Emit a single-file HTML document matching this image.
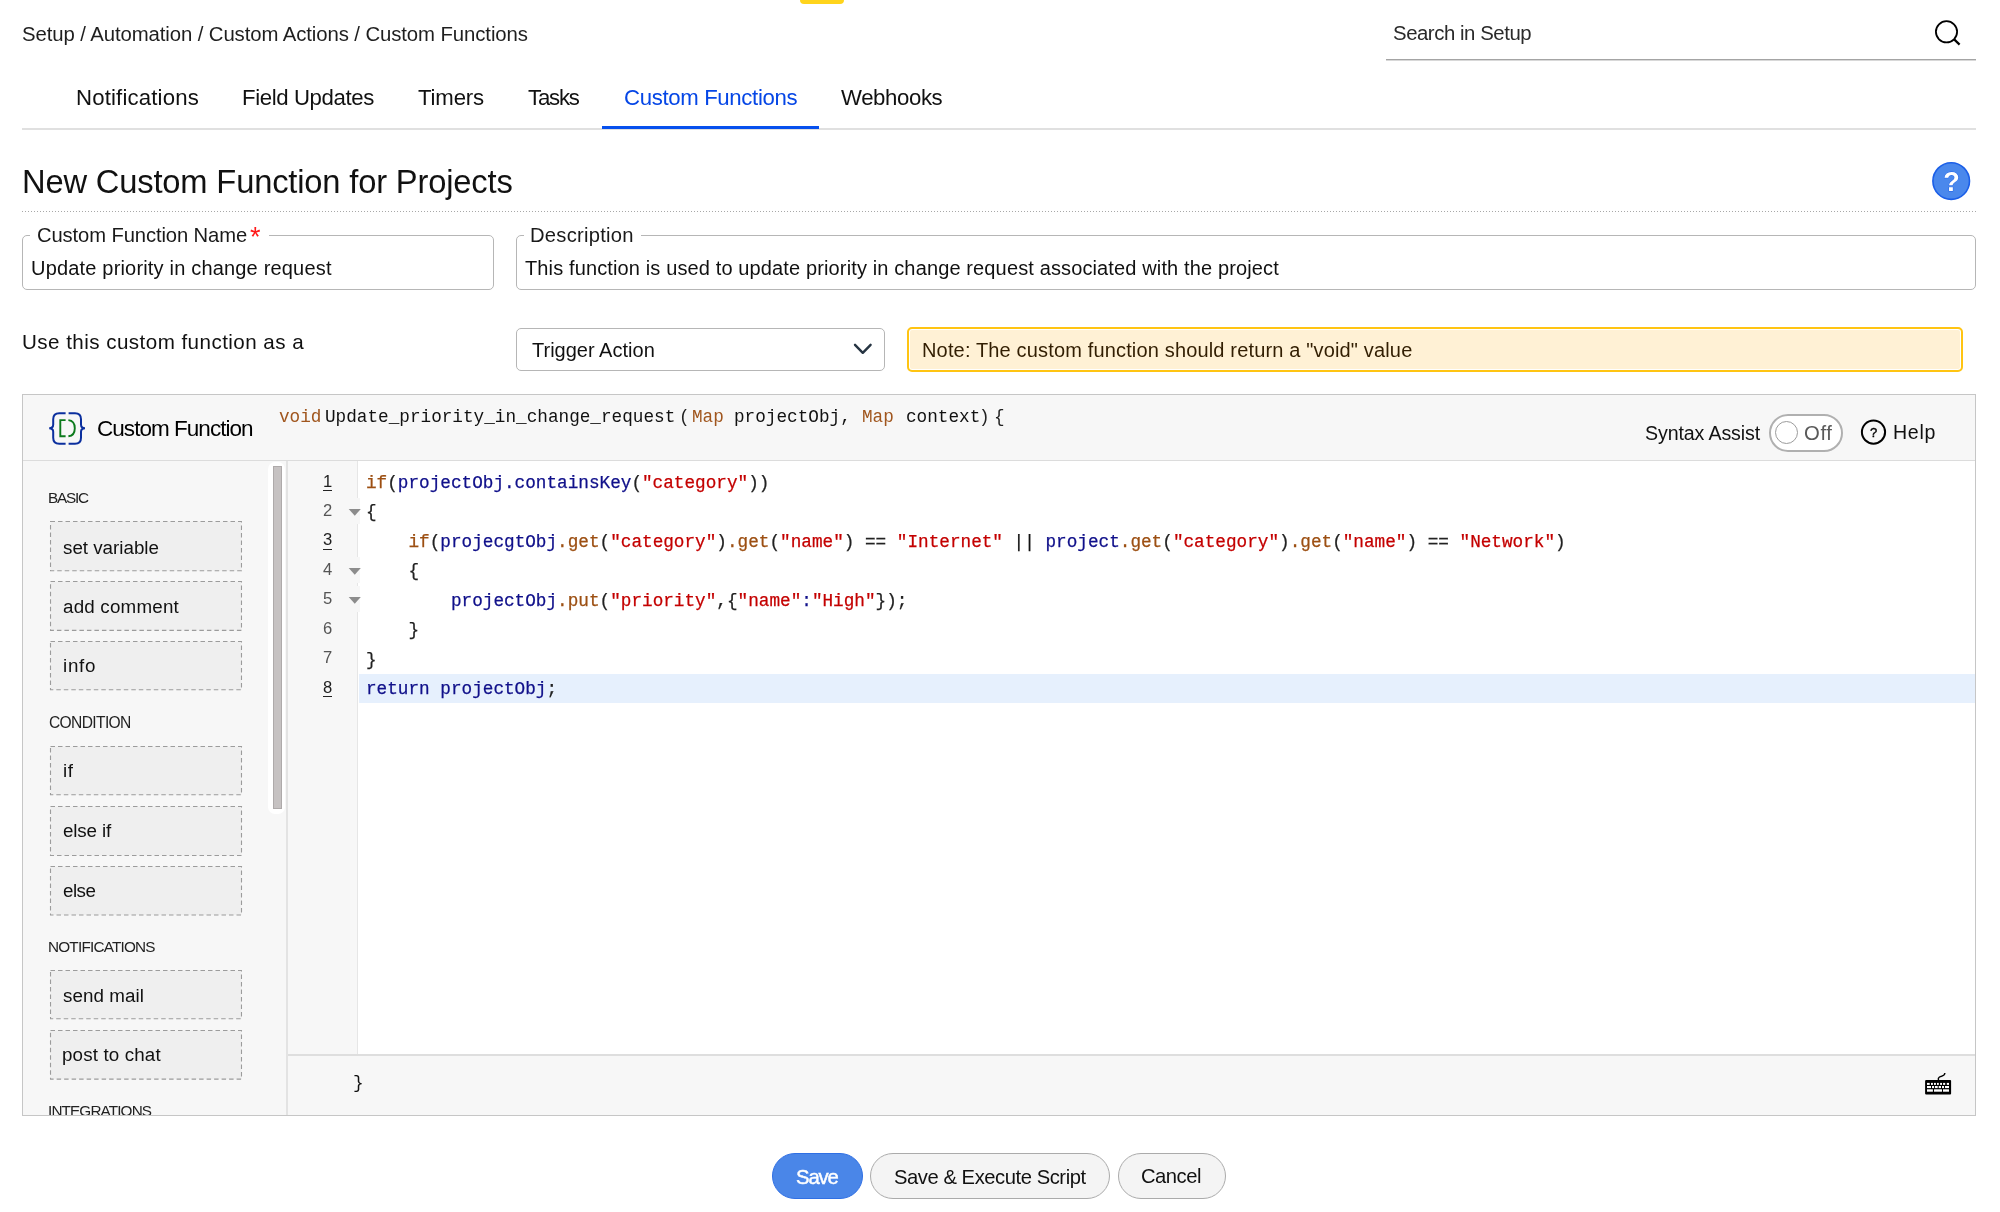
<!DOCTYPE html>
<html><head><meta charset="utf-8"><title>Custom Function</title>
<style>
html,body{margin:0;padding:0;width:2000px;height:1212px;overflow:hidden;background:#fff;font-family:"Liberation Sans",sans-serif;}
.t{position:absolute;white-space:pre;will-change:transform;}
.b{position:absolute;box-sizing:border-box;}
svg.b{overflow:visible;will-change:transform;}
</style></head><body>
<div class="b" style="left:799.6px;top:-4px;width:44px;height:8.2px;background:#ffd41c;border-radius:4px;"></div>
<div class="b" style="left:1386px;top:59px;width:590px;height:1px;background:#a4a4a4;box-shadow:0 1px 0 #d8d8d8;"></div>
<svg class="b" style="left:1930px;top:16px" width="36" height="36" viewBox="1930 16 36 36"><circle cx="1946.5" cy="31.8" r="10.6" fill="none" stroke="#000" stroke-width="1.8"/><line x1="1954.2" y1="39.4" x2="1959.6" y2="44.6" stroke="#000" stroke-width="2.2"/></svg>
<div class="b" style="left:22px;top:128px;width:1954px;height:2px;background:#e0e0e0;"></div>
<div class="b" style="left:602px;top:126px;width:217px;height:3px;background:#0650ee;"></div>
<div class="b" style="left:22px;top:211px;width:1954px;height:1px;background:repeating-linear-gradient(to right,#a8a8a8 0 1px,transparent 1px 3px);"></div>
<svg class="b" style="left:1928px;top:158px" width="46" height="46" viewBox="1928 158 46 46"><circle cx="1951.2" cy="181.1" r="18.3" fill="#4a88ec" stroke="#1b5fe8" stroke-width="1.6"/><text x="1951.4" y="191" text-anchor="middle" font-family="Liberation Sans" font-weight="700" font-size="27" fill="#fff" stroke="#1b5fe8" stroke-width="0.8" paint-order="stroke">?</text></svg>
<div class="b" style="left:22px;top:235px;width:472px;height:55px;border:1px solid #b6b6b6;border-radius:5px;"></div>
<div class="b" style="left:30px;top:232px;width:238.5px;height:6px;background:#fff;"></div>
<div class="b" style="left:516px;top:235px;width:1460px;height:55px;border:1px solid #b6b6b6;border-radius:5px;"></div>
<div class="b" style="left:524px;top:232px;width:117px;height:6px;background:#fff;"></div>
<div class="b" style="left:516px;top:327.5px;width:368.5px;height:43.5px;border:1px solid #b6b6b6;border-radius:5px;"></div>
<svg class="b" style="left:848px;top:338px" width="30" height="22" viewBox="848 338 30 22"><polyline points="855,344.8 862.8,352.8 870.6,344.8" fill="none" stroke="#263442" stroke-width="2.4" stroke-linecap="round" stroke-linejoin="round"/></svg>
<div class="b" style="left:906.5px;top:327.2px;width:1056.5px;height:44.6px;border:2px solid #ffc412;background:#fff1d5;border-radius:5px;box-shadow:inset 0 0 0 1px #fff;"></div>
<div class="b" style="left:22px;top:394px;width:1954px;height:721.5px;border:1px solid #c6c6c6;background:#f7f7f7;"></div>
<div class="b" style="left:23px;top:460px;width:1952px;height:1px;background:#dcdcdc;"></div>
<div class="b" style="left:286px;top:461px;width:2px;height:654px;background:#e3e3e3;"></div>
<div class="b" style="left:268.3px;top:462px;width:16.5px;height:352px;background:#fff;border-radius:7px;"></div>
<div class="b" style="left:273.2px;top:466px;width:8.4px;height:343px;background:#c6c2c2;box-shadow:inset 0 0 0 1px #aeaaaa;"></div>
<div class="b" style="left:287.5px;top:461px;width:70px;height:594px;background:#f7f7f7;"></div>
<div class="b" style="left:357px;top:461px;width:1px;height:594px;background:#e6e6e6;"></div>
<div class="b" style="left:358px;top:461px;width:1617px;height:594px;background:#fff;"></div>
<div class="b" style="left:358.5px;top:674px;width:1616.5px;height:28.6px;background:#e6f0fd;"></div>
<div class="b" style="left:287.5px;top:1054px;width:1687.5px;height:2px;background:#dedede;"></div>
<div class="b" style="left:287.5px;top:1056px;width:1687.5px;height:59px;background:#f7f7f7;"></div>
<svg class="b" style="left:50px;top:521.4px" width="192" height="50.2" viewBox="0 0 192 50.2"><rect x="0.5" y="0.5" width="191" height="49.20" fill="#efefef" stroke="#9c9c9c" stroke-width="1.1" stroke-dasharray="4.5 3"/></svg>
<svg class="b" style="left:50px;top:581.0px" width="192" height="49.9" viewBox="0 0 192 49.9"><rect x="0.5" y="0.5" width="191" height="48.90" fill="#efefef" stroke="#9c9c9c" stroke-width="1.1" stroke-dasharray="4.5 3"/></svg>
<svg class="b" style="left:50px;top:641.3px" width="192" height="49.3" viewBox="0 0 192 49.3"><rect x="0.5" y="0.5" width="191" height="48.30" fill="#efefef" stroke="#9c9c9c" stroke-width="1.1" stroke-dasharray="4.5 3"/></svg>
<svg class="b" style="left:50px;top:746.0px" width="192" height="49.3" viewBox="0 0 192 49.3"><rect x="0.5" y="0.5" width="191" height="48.30" fill="#efefef" stroke="#9c9c9c" stroke-width="1.1" stroke-dasharray="4.5 3"/></svg>
<svg class="b" style="left:50px;top:805.5px" width="192" height="50" viewBox="0 0 192 50"><rect x="0.5" y="0.5" width="191" height="49.00" fill="#efefef" stroke="#9c9c9c" stroke-width="1.1" stroke-dasharray="4.5 3"/></svg>
<svg class="b" style="left:50px;top:865.5px" width="192" height="49.5" viewBox="0 0 192 49.5"><rect x="0.5" y="0.5" width="191" height="48.50" fill="#efefef" stroke="#9c9c9c" stroke-width="1.1" stroke-dasharray="4.5 3"/></svg>
<svg class="b" style="left:50px;top:970.4px" width="192" height="49.2" viewBox="0 0 192 49.2"><rect x="0.5" y="0.5" width="191" height="48.20" fill="#efefef" stroke="#9c9c9c" stroke-width="1.1" stroke-dasharray="4.5 3"/></svg>
<svg class="b" style="left:50px;top:1029.8px" width="192" height="49.6" viewBox="0 0 192 49.6"><rect x="0.5" y="0.5" width="191" height="48.60" fill="#efefef" stroke="#9c9c9c" stroke-width="1.1" stroke-dasharray="4.5 3"/></svg>
<div class="b" style="left:357px;top:497.65px;width:3px;height:26px;background:#f7f7f7;"></div>
<div class="b" style="left:357px;top:556.55px;width:3px;height:26px;background:#f7f7f7;"></div>
<div class="b" style="left:357px;top:586.0px;width:3px;height:26px;background:#f7f7f7;"></div>
<svg class="b" style="left:346px;top:506.65px" width="18" height="12" viewBox="0 0 18 12"><polygon points="2.7,2 14.8,2 8.75,8.8" fill="#8c8c8c"/></svg>
<svg class="b" style="left:346px;top:565.55px" width="18" height="12" viewBox="0 0 18 12"><polygon points="2.7,2 14.8,2 8.75,8.8" fill="#8c8c8c"/></svg>
<svg class="b" style="left:346px;top:595.00px" width="18" height="12" viewBox="0 0 18 12"><polygon points="2.7,2 14.8,2 8.75,8.8" fill="#8c8c8c"/></svg>
<svg class="b" style="left:44px;top:408px" width="46" height="40" viewBox="44 408 46 40"><path d="M65.6,413.2 H59.2 Q53.2,413.2 53.2,419.2 V424.6 Q53.2,428.2 49.2,428.2 Q53.2,428.2 53.2,431.8 V437.8 Q53.2,443.8 59.2,443.8 H65.6" fill="none" stroke="#0b2f9e" stroke-width="2"/><path d="M68.6,413.2 H75 Q81,413.2 81,419.2 V424.6 Q81,428.2 85,428.2 Q81,428.2 81,431.8 V437.8 Q81,443.8 75,443.8 H68.6" fill="none" stroke="#0b2f9e" stroke-width="2"/><path d="M65.6,420.1 H60.3 V436.3 H65.6" fill="none" stroke="#0c7a1c" stroke-width="1.9"/><path d="M68.4,420.1 Q74.8,420.8 74.8,428.2 Q74.8,435.6 68.4,436.3" fill="none" stroke="#0c7a1c" stroke-width="1.9"/></svg>
<div class="b" style="left:1768.8px;top:414.3px;width:74.4px;height:37.7px;border:2px solid #b0b0b0;border-radius:19px;background:#fff;"></div>
<div class="b" style="left:1774.8px;top:420.5px;width:23px;height:23px;border:1.5px solid #9c9c9c;border-radius:50%;background:#fff;"></div>
<svg class="b" style="left:1856px;top:415px" width="36" height="34" viewBox="1856 415 36 34"><circle cx="1873.5" cy="432.1" r="11.6" fill="none" stroke="#000" stroke-width="2"/><text x="1873.6" y="436.6" text-anchor="middle" font-family="Liberation Sans" font-size="13" fill="#000" stroke="#000" stroke-width="0.4">?</text></svg>
<svg class="b" style="left:1920px;top:1068px" width="36" height="32" viewBox="1920 1068 36 32"><path d="M1938.4,1080 V1078.3 Q1939,1076.8 1941.5,1076.3 Q1944.6,1075.6 1944.9,1073" fill="none" stroke="#000" stroke-width="1.4"/><rect x="1925.1" y="1080" width="26" height="14.6" rx="1" fill="#000"/><rect x="1927" y="1082.9" width="2.70" height="2.0" fill="#fff"/><rect x="1931" y="1082.9" width="1.90" height="2.0" fill="#fff"/><rect x="1934" y="1082.9" width="1.90" height="2.0" fill="#fff"/><rect x="1937" y="1082.9" width="1.80" height="2.0" fill="#fff"/><rect x="1940.1" y="1082.9" width="1.90" height="2.0" fill="#fff"/><rect x="1943.1" y="1082.9" width="2.10" height="2.0" fill="#fff"/><rect x="1946.8" y="1082.9" width="2.20" height="2.0" fill="#fff"/><rect x="1927" y="1086" width="4.00" height="2.1" fill="#fff"/><rect x="1932" y="1086" width="2.00" height="2.1" fill="#fff"/><rect x="1934.9" y="1086" width="2.80" height="2.1" fill="#fff"/><rect x="1938.7" y="1086" width="2.30" height="2.1" fill="#fff"/><rect x="1942" y="1086" width="2.00" height="2.1" fill="#fff"/><rect x="1945" y="1086" width="4.00" height="2.1" fill="#fff"/><rect x="1927" y="1089.3" width="5.90" height="2.4" fill="#fff"/><rect x="1934" y="1089.3" width="8.00" height="2.4" fill="#fff"/><rect x="1943" y="1089.3" width="6.00" height="2.4" fill="#fff"/></svg>
<div class="b" style="left:772px;top:1153.2px;width:91.2px;height:46.2px;background:#4a86e8;border:1px solid #2f6fe4;border-radius:23px;"></div>
<div class="b" style="left:870.4px;top:1153.4px;width:239.6px;height:46px;background:#f4f4f4;border:1px solid #ababab;border-radius:23px;"></div>
<div class="b" style="left:1117.5px;top:1153.4px;width:108.1px;height:46px;background:#f4f4f4;border:1px solid #ababab;border-radius:23px;"></div>
<div class="b" style="left:322.5px;top:489.90000000000003px;width:9.8px;height:1.3px;background:#222;"></div>
<div class="b" style="left:322.5px;top:548.8000000000001px;width:9.8px;height:1.3px;background:#222;"></div>
<div class="b" style="left:322.5px;top:696.0500000000001px;width:9.8px;height:1.3px;background:#222;"></div>
<div class="t" style="left:21.58px;top:21.45px;font-size:20.35px;line-height:27px;color:#1f1f1f;letter-spacing:-0.098px;">Setup / Automation / Custom Actions / Custom Functions</div>
<div class="t" style="left:1393.48px;top:19.85px;font-size:20.35px;line-height:27px;color:#2a2a2a;letter-spacing:-0.442px;">Search in Setup</div>
<div class="t" style="left:75.78px;top:82.60px;font-size:22.2px;line-height:29px;color:#111;letter-spacing:0.164px;">Notifications</div>
<div class="t" style="left:241.98px;top:82.60px;font-size:22.2px;line-height:29px;color:#111;letter-spacing:-0.381px;">Field Updates</div>
<div class="t" style="left:418.40px;top:82.60px;font-size:22.2px;line-height:29px;color:#111;letter-spacing:-0.152px;">Timers</div>
<div class="t" style="left:528.40px;top:82.60px;font-size:22.2px;line-height:29px;color:#111;letter-spacing:-1.203px;">Tasks</div>
<div class="t" style="left:623.77px;top:82.60px;font-size:22.2px;line-height:29px;color:#0546e6;letter-spacing:-0.351px;">Custom Functions</div>
<div class="t" style="left:841.40px;top:82.60px;font-size:22.2px;line-height:29px;color:#111;letter-spacing:-0.389px;">Webhooks</div>
<div class="t" style="left:21.72px;top:160.26px;font-size:32.7px;line-height:43px;color:#111;letter-spacing:-0.167px;">New Custom Function for Projects</div>
<div class="t" style="left:37.07px;top:222.30px;font-size:20.2px;line-height:27px;color:#1a1a1a;letter-spacing:-0.101px;">Custom Function Name</div>
<div class="t" style="left:250.16px;top:219.24px;font-size:27px;line-height:36px;color:#ff1a1a;">*</div>
<div class="t" style="left:529.84px;top:222.30px;font-size:20.2px;line-height:27px;color:#1a1a1a;letter-spacing:0.249px;">Description</div>
<div class="t" style="left:30.71px;top:254.82px;font-size:20.0px;line-height:26px;color:#111;letter-spacing:0.182px;">Update priority in change request</div>
<div class="t" style="left:524.55px;top:254.67px;font-size:20.0px;line-height:26px;color:#111;letter-spacing:0.130px;">This function is used to update priority in change request associated with the project</div>
<div class="t" style="left:22.01px;top:328.46px;font-size:20.6px;line-height:27px;color:#111;letter-spacing:0.450px;">Use this custom function as a</div>
<div class="t" style="left:532.15px;top:336.87px;font-size:20.0px;line-height:26px;color:#111;letter-spacing:0.008px;">Trigger Action</div>
<div class="t" style="left:921.96px;top:336.87px;font-size:20.0px;line-height:26px;color:#321e02;letter-spacing:0.158px;">Note: The custom function should return a "void" value</div>
<div class="t" style="left:96.86px;top:413.70px;font-size:22.5px;line-height:30px;color:#000;letter-spacing:-0.962px;">Custom Function</div>
<div class="t" style="left:1644.86px;top:420.11px;font-size:19.6px;line-height:26px;color:#111;letter-spacing:-0.118px;">Syntax Assist</div>
<div class="t" style="left:1804.04px;top:419.96px;font-size:20.3px;line-height:27px;color:#5a5a5a;letter-spacing:0.600px;">Off</div>
<div class="t" style="left:1892.89px;top:418.71px;font-size:19.6px;line-height:26px;color:#111;letter-spacing:0.711px;">Help</div>
<div class="t" style="left:48.14px;top:487.90px;font-size:15.3px;line-height:20px;color:#222;letter-spacing:-1.217px;">BASIC</div>
<div class="t" style="left:48.51px;top:711.99px;font-size:15.6px;line-height:21px;color:#222;letter-spacing:-0.641px;">CONDITION</div>
<div class="t" style="left:48.04px;top:936.60px;font-size:15.3px;line-height:20px;color:#222;letter-spacing:-0.786px;">NOTIFICATIONS</div>
<div class="b" style="left:23px;top:1090px;width:263px;height:25px;overflow:hidden;"><div class="t" style="left:24.89px;top:11.00px;font-size:15.3px;line-height:20px;color:#222;letter-spacing:-0.871px;">INTEGRATIONS</div></div>
<div class="t" style="left:62.88px;top:534.58px;font-size:18.8px;line-height:25px;color:#111;letter-spacing:-0.008px;">set variable</div>
<div class="t" style="left:63.10px;top:593.88px;font-size:18.8px;line-height:25px;color:#111;letter-spacing:0.195px;">add comment</div>
<div class="t" style="left:63.34px;top:653.48px;font-size:18.8px;line-height:25px;color:#111;letter-spacing:0.722px;">info</div>
<div class="t" style="left:62.84px;top:758.38px;font-size:18.8px;line-height:25px;color:#111;letter-spacing:0.600px;">if</div>
<div class="t" style="left:63.30px;top:818.28px;font-size:18.8px;line-height:25px;color:#111;letter-spacing:-0.132px;">else if</div>
<div class="t" style="left:63.30px;top:877.68px;font-size:18.8px;line-height:25px;color:#111;letter-spacing:-0.540px;">else</div>
<div class="t" style="left:63.18px;top:982.98px;font-size:18.8px;line-height:25px;color:#111;letter-spacing:0.063px;">send mail</div>
<div class="t" style="left:62.49px;top:1042.18px;font-size:18.8px;line-height:25px;color:#111;letter-spacing:0.141px;">post to chat</div>
<div class="t" style="left:278.50px;top:404.89px;font-size:17.7px;line-height:24px;color:#a0561e;font-family:'Liberation Mono', monospace;">void</div>
<div class="t" style="left:325.47px;top:404.89px;font-size:17.7px;line-height:24px;color:#111;font-family:'Liberation Mono', monospace;">Update_priority_in_change_request</div>
<div class="t" style="left:679.34px;top:404.89px;font-size:17.7px;line-height:24px;color:#222;font-family:'Liberation Mono', monospace;">(</div>
<div class="t" style="left:691.89px;top:404.89px;font-size:17.7px;line-height:24px;color:#a0561e;font-family:'Liberation Mono', monospace;">Map</div>
<div class="t" style="left:734.45px;top:404.89px;font-size:17.7px;line-height:24px;color:#111;font-family:'Liberation Mono', monospace;">projectObj,</div>
<div class="t" style="left:861.89px;top:404.89px;font-size:17.7px;line-height:24px;color:#a0561e;font-family:'Liberation Mono', monospace;">Map</div>
<div class="t" style="left:905.88px;top:404.89px;font-size:17.7px;line-height:24px;color:#111;font-family:'Liberation Mono', monospace;">context</div>
<div class="t" style="left:979.30px;top:404.89px;font-size:17.7px;line-height:24px;color:#222;font-family:'Liberation Mono', monospace;">)</div>
<div class="t" style="left:994.24px;top:404.89px;font-size:17.7px;line-height:24px;color:#222;font-family:'Liberation Mono', monospace;">{</div>
<div class="t" style="left:322.90px;top:470.55px;font-size:16.6px;line-height:22px;color:#1e1e1e;">1</div>
<div class="t" style="left:322.90px;top:500.00px;font-size:16.6px;line-height:22px;color:#555;">2</div>
<div class="t" style="left:322.90px;top:529.45px;font-size:16.6px;line-height:22px;color:#1e1e1e;">3</div>
<div class="t" style="left:322.90px;top:558.90px;font-size:16.6px;line-height:22px;color:#555;">4</div>
<div class="t" style="left:322.90px;top:588.35px;font-size:16.6px;line-height:22px;color:#555;">5</div>
<div class="t" style="left:322.90px;top:617.80px;font-size:16.6px;line-height:22px;color:#555;">6</div>
<div class="t" style="left:322.90px;top:647.25px;font-size:16.6px;line-height:22px;color:#555;">7</div>
<div class="t" style="left:322.90px;top:676.70px;font-size:16.6px;line-height:22px;color:#1e1e1e;">8</div>
<div class="t" style="left:353.16px;top:1071.29px;font-size:17.7px;line-height:24px;color:#111;font-family:'Liberation Mono', monospace;">}</div>
<div class="t" style="left:796.28px;top:1164.26px;font-size:20.3px;line-height:27px;color:#fff;letter-spacing:-1.134px;-webkit-text-stroke:0.45px #fff;">Save</div>
<div class="t" style="left:894.08px;top:1163.50px;font-size:20.2px;line-height:27px;color:#111;letter-spacing:-0.439px;">Save &amp; Execute Script</div>
<div class="t" style="left:1141.47px;top:1163.30px;font-size:20.2px;line-height:27px;color:#111;letter-spacing:-0.472px;">Cancel</div>
<div class="t" style="left:365.66px;top:470.99px;font-family:'Liberation Mono', monospace;font-size:17.7px;line-height:24px;-webkit-text-stroke:0.25px currentColor;"><span style="color:#9c4f12">if</span><span style="color:#222">(</span><span style="color:#10108a">projectObj.containsKey</span><span style="color:#222">(</span><span style="color:#c40000">"category"</span><span style="color:#222">))</span></div>
<div class="t" style="left:365.66px;top:500.44px;font-family:'Liberation Mono', monospace;font-size:17.7px;line-height:24px;-webkit-text-stroke:0.25px currentColor;"><span style="color:#222">{</span></div>
<div class="t" style="left:365.66px;top:529.89px;font-family:'Liberation Mono', monospace;font-size:17.7px;line-height:24px;-webkit-text-stroke:0.25px currentColor;"><span style="color:#222">    </span><span style="color:#9c4f12">if</span><span style="color:#222">(</span><span style="color:#10108a">projecgtObj</span><span style="color:#9c4f12">.get</span><span style="color:#222">(</span><span style="color:#c40000">"category"</span><span style="color:#222">)</span><span style="color:#9c4f12">.get</span><span style="color:#222">(</span><span style="color:#c40000">"name"</span><span style="color:#222">)</span><span style="color:#222"> == </span><span style="color:#c40000">"Internet"</span><span style="color:#111"> || </span><span style="color:#10108a">project</span><span style="color:#9c4f12">.get</span><span style="color:#222">(</span><span style="color:#c40000">"category"</span><span style="color:#222">)</span><span style="color:#9c4f12">.get</span><span style="color:#222">(</span><span style="color:#c40000">"name"</span><span style="color:#222">)</span><span style="color:#222"> == </span><span style="color:#c40000">"Network"</span><span style="color:#222">)</span></div>
<div class="t" style="left:365.66px;top:559.34px;font-family:'Liberation Mono', monospace;font-size:17.7px;line-height:24px;-webkit-text-stroke:0.25px currentColor;"><span style="color:#222">    {</span></div>
<div class="t" style="left:365.66px;top:588.79px;font-family:'Liberation Mono', monospace;font-size:17.7px;line-height:24px;-webkit-text-stroke:0.25px currentColor;"><span style="color:#222">        </span><span style="color:#10108a">projectObj</span><span style="color:#9c4f12">.put</span><span style="color:#222">(</span><span style="color:#c40000">"priority"</span><span style="color:#222">,{</span><span style="color:#c40000">"name"</span><span style="color:#10108a">:</span><span style="color:#c40000">"High"</span><span style="color:#222">});</span></div>
<div class="t" style="left:365.66px;top:618.24px;font-family:'Liberation Mono', monospace;font-size:17.7px;line-height:24px;-webkit-text-stroke:0.25px currentColor;"><span style="color:#222">    }</span></div>
<div class="t" style="left:365.66px;top:647.69px;font-family:'Liberation Mono', monospace;font-size:17.7px;line-height:24px;-webkit-text-stroke:0.25px currentColor;"><span style="color:#222">}</span></div>
<div class="t" style="left:365.66px;top:677.14px;font-family:'Liberation Mono', monospace;font-size:17.7px;line-height:24px;-webkit-text-stroke:0.25px currentColor;"><span style="color:#10108a">return</span><span style="color:#222"> </span><span style="color:#10108a">projectObj</span><span style="color:#222">;</span></div>

</body></html>
